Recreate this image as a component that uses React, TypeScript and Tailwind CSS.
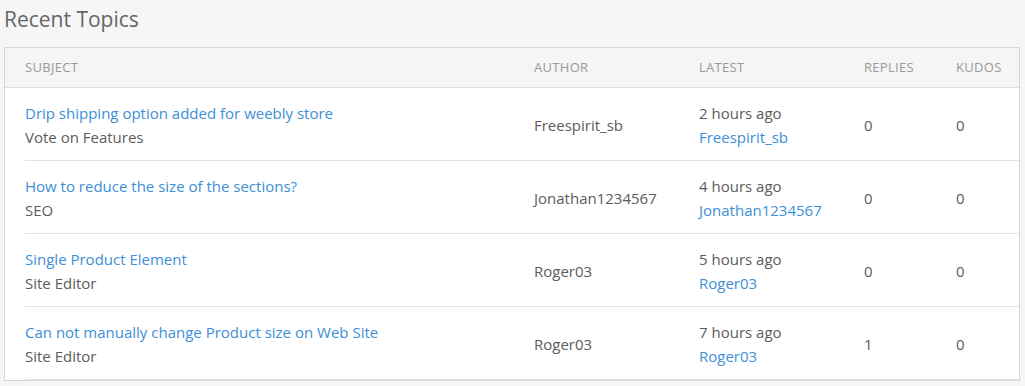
const topics = [
  { subject: 'Drip shipping option added for weebly store', board: 'Vote on Features', author: 'Freespirit_sb', time: '2 hours ago', replies: 0, kudos: 0 },
  { subject: 'How to reduce the size of the sections?', board: 'SEO', author: 'Jonathan1234567', time: '4 hours ago', replies: 0, kudos: 0 },
  { subject: 'Single Product Element', board: 'Site Editor', author: 'Roger03', time: '5 hours ago', replies: 0, kudos: 0 },
  { subject: 'Can not manually change Product size on Web Site', board: 'Site Editor', author: 'Roger03', time: '7 hours ago', replies: 1, kudos: 0 },
]

export default function App() {
  return (
    <div className="min-h-[386px] bg-[#f6f6f6] px-1 font-['Open_Sans',sans-serif] text-[#5c5c5c]">
      <h2 className="pt-[5px] pb-[14px] text-[21px] leading-[28px] text-[#666]">Recent Topics</h2>
      <div className="border border-[#d6d6d6] bg-white mr-[1px]">
        <div className="grid grid-cols-[509px_165px_165px_92px_1fr] h-[40px] items-center border-b border-[#e0e0e0] bg-[#f5f5f5] pl-5 text-[13px] tracking-[0.3px] uppercase text-[#999]">
          <span>Subject</span>
          <span>Author</span>
          <span>Latest</span>
          <span>Replies</span>
          <span>Kudos</span>
        </div>
        {topics.map((t) => (
          <div key={t.subject} className="ml-5 grid grid-cols-[509px_165px_165px_92px_1fr] h-[73px] pt-[1px] items-center border-b border-[#e3e3e3] text-[15px] leading-[24px]">
            <div>
              <div className="text-[#3d8fd6]">{t.subject}</div>
              <div>{t.board}</div>
            </div>
            <div>{t.author}</div>
            <div>
              <div>{t.time}</div>
              <div className="text-[#3d8fd6]">{t.author}</div>
            </div>
            <div>{t.replies}</div>
            <div>{t.kudos}</div>
          </div>
        ))}
      </div>
    </div>
  )
}
